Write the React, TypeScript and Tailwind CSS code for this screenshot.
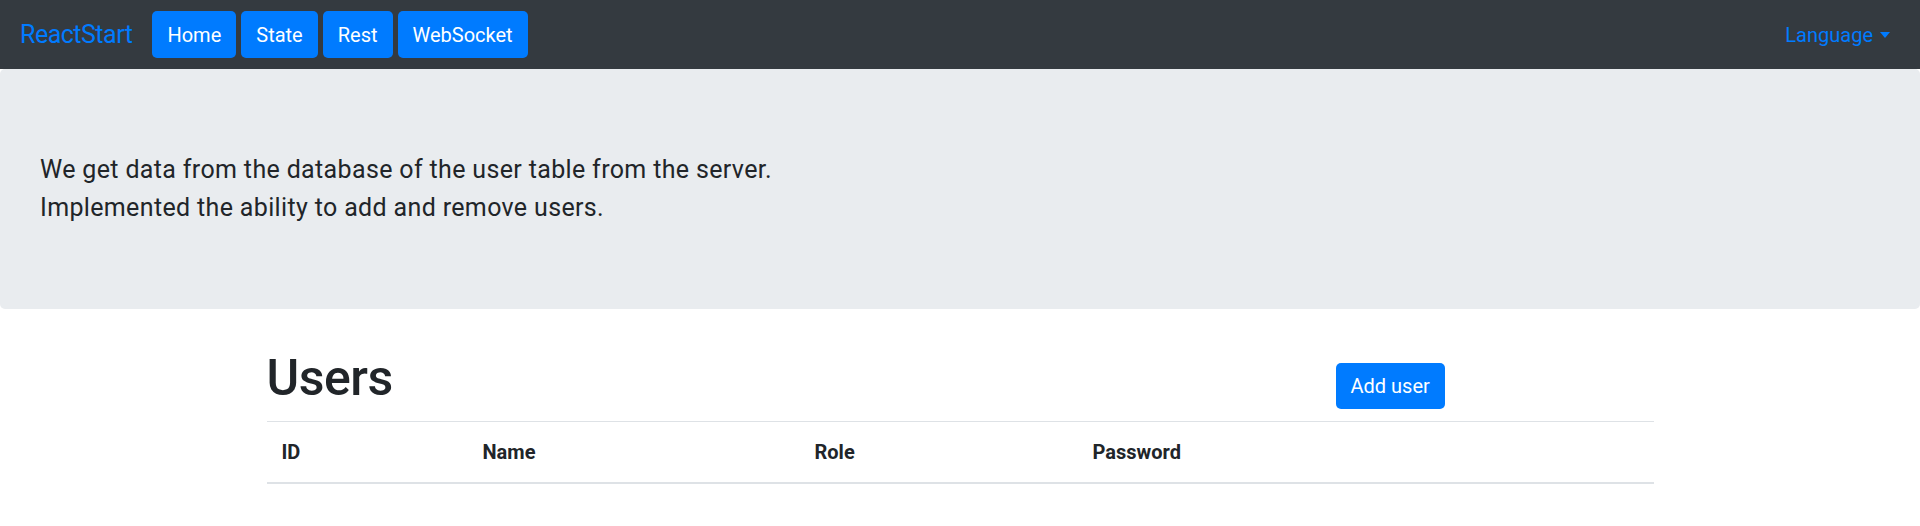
import React from 'react';

const navLinks = ['Home', 'State', 'Rest', 'WebSocket'];
const columns = [
  { label: 'ID', width: 'w-[201px]' },
  { label: 'Name', width: 'w-[332px]' },
  { label: 'Role', width: 'w-[278px]' },
  { label: 'Password', width: '' },
];

export default function App() {
  return (
    <div className="min-h-[526px] bg-white text-[#212529] font-['Roboto',sans-serif]">
      {/* Navbar */}
      <nav className="h-[69px] bg-[#343a40] flex items-center px-5">
        <span className="text-[25px] tracking-[-0.5px] text-[#007bff] mr-5 leading-none">ReactStart</span>
        <div className="flex items-center gap-[5px]">
          {navLinks.map((l) => (
            <button
              key={l}
              className="h-[47px] px-[15px] rounded-[5px] bg-[#007bff] text-white text-[20px] leading-[30px]"
            >
              {l}
            </button>
          ))}
        </div>
        <div className="ml-auto mr-[10px] flex items-center gap-[7px] text-[20px] text-[#007bff]">
          <span>Language</span>
          <span className="w-0 h-0 border-x-[5px] border-x-transparent border-t-[6px] border-t-[#007bff]" />
        </div>
      </nav>

      {/* Jumbotron */}
      <div className="h-[240px] bg-[#e9ecef] rounded-[5px] pl-10 pt-[82px] text-[25px] leading-[38px] tracking-[0.35px]">
        <p>We get data from the database of the user table from the server.</p>
        <p>Implemented the ability to add and remove users.</p>
      </div>

      {/* Users */}
      <div className="w-[1387px] mx-auto mt-[39px]">
        <div className="flex">
          <h1 className="w-[1069px] text-[50px] font-medium leading-[60px] tracking-[-0.5px]">Users</h1>
          <div className="pt-[15px]">
            <button className="h-[46px] px-[15px] rounded-[5px] bg-[#007bff] text-white text-[20px] leading-[30px]">
              Add user
            </button>
          </div>
        </div>
        <table className="w-full mt-[12px] border-collapse text-left">
          <thead>
            <tr className="border-t border-t-[#dee2e6] border-b-[2px] border-b-[#dee2e6]">
              {columns.map((c) => (
                <th key={c.label} className={`${c.width} p-[15px] text-[20px] font-bold leading-[30px]`}>
                  {c.label}
                </th>
              ))}
            </tr>
          </thead>
        </table>
      </div>
    </div>
  );
}
